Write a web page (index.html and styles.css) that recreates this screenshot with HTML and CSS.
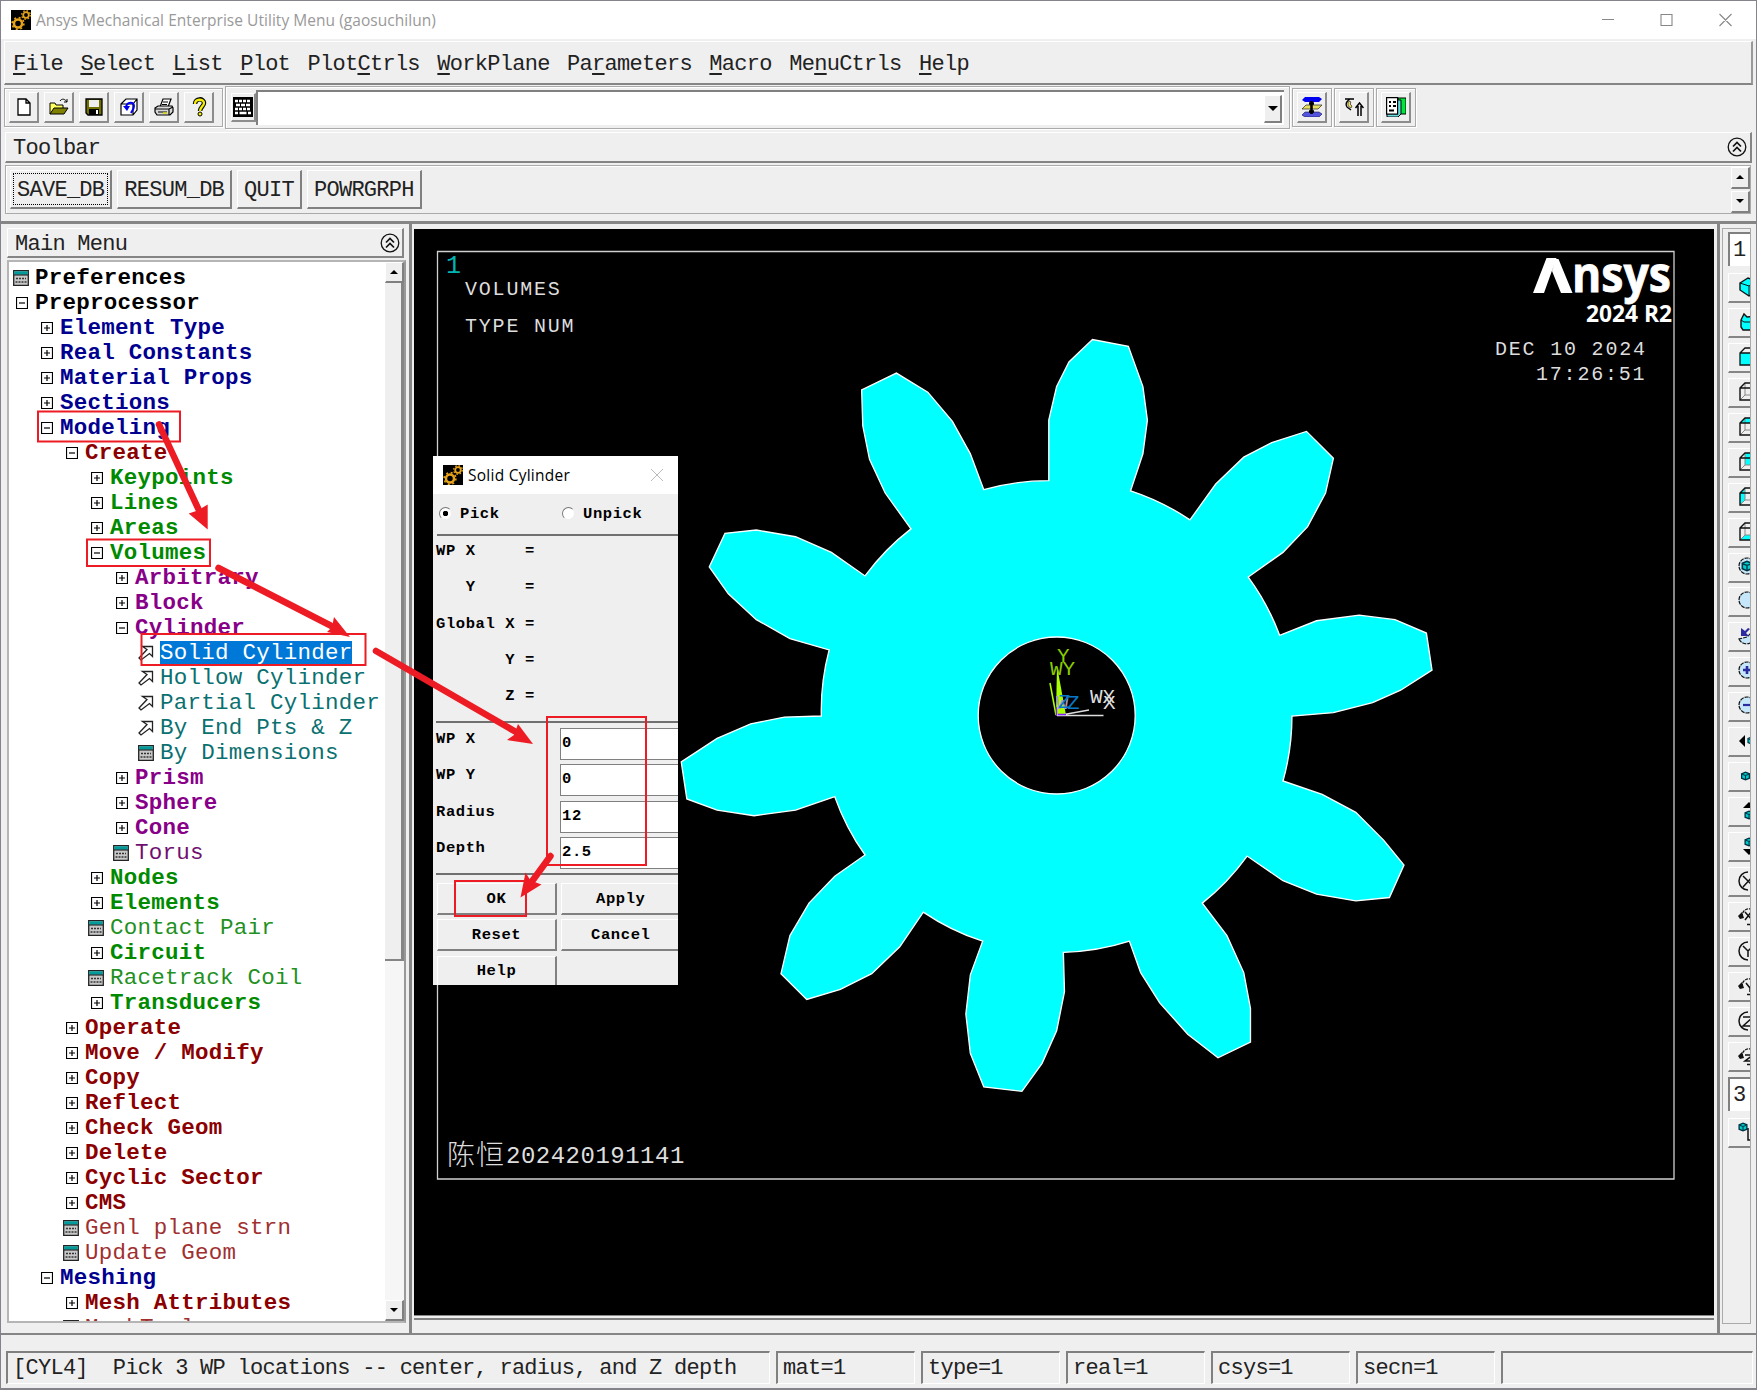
FILE: index.html
```html
<!DOCTYPE html>
<html lang="en">
<head>
<meta charset="utf-8">
<title>Ansys Mechanical Enterprise Utility Menu</title>
<link rel="stylesheet" href="styles.css">
</head>
<body>
<svg class="defs" width="0" height="0">
  <defs>
    <symbol id="plus" viewBox="0 0 12 12"><path d="M.5.5h11v11H.5z" fill="#fff" stroke="#000" stroke-width="1.2"/><path d="M3 6h6M6 3v6" stroke="#000" stroke-width="1.2"/></symbol>
    <symbol id="minus" viewBox="0 0 12 12"><path d="M.5.5h11v11H.5z" fill="#fff" stroke="#000" stroke-width="1.2"/><path d="M3 6h6" stroke="#000" stroke-width="1.2"/></symbol>
    <symbol id="form" viewBox="0 0 16 16"><path d="M.7.7h14.6v14.6H.7z" fill="#c8c8c8" stroke="#222" stroke-width="1.3"/><path d="M1.3 1.3h13.4v3.4H1.3z" fill="#009a9a"/><path d="M1 5h14" stroke="#111"/><path d="M3 8.5h10M2.500 12h11" stroke="#333" stroke-width="1.4" stroke-dasharray="2 1"/></symbol>
    <symbol id="pick" viewBox="0 0 16 16"><path d="M4.500 1.500h10v10l-3-3L3 15l-2-2 8-8.500z" fill="#fff" stroke="#222" stroke-width="1.3"/></symbol>
    <symbol id="gears" viewBox="0 0 20 20"><path d="M0 0h20v20H0z" fill="#000"/><circle cx="7" cy="13.500" r="4" fill="none" stroke="#e5a21c" stroke-width="2.500"/><circle cx="7" cy="13.500" r="5.900" fill="none" stroke="#e5a21c" stroke-width="1.600" stroke-dasharray="2 2.630"/><circle cx="15" cy="5" r="2.800" fill="none" stroke="#e5a21c" stroke-width="1.800"/><circle cx="15" cy="5" r="4.300" fill="none" stroke="#e5a21c" stroke-width="1.300" stroke-dasharray="1.600 1.780"/></symbol>
    <symbol id="collapse" viewBox="0 0 20 20"><circle cx="10" cy="10" r="8.800" fill="none" stroke="#111" stroke-width="1.300"/><path d="M6 9.500l4-4 4 4M6 14.500l4-4 4 4" fill="none" stroke="#111" stroke-width="1.700"/></symbol>
    <symbol id="cube" viewBox="0 0 20 20"><path d="M2 6l5-5h12v12l-5 5H2zM2 6h12v12M14 6l5-5" fill="none" stroke="#111" stroke-width="1.300"/></symbol>
    <symbol id="minicube" viewBox="0 0 9 9"><path d="M1 2.500L4.500 1 8 2.500v4L4.500 8 1 6.500z" fill="#00cfcf" stroke="#034" stroke-width="1.200"/><path d="M1.500 3l3 1 3-1M4.500 4v4" stroke="#034" fill="none"/></symbol>
    <symbol id="wire" viewBox="0 0 20 20"><path d="M7 1v12h12M2 18l5-5" fill="none" stroke="#888"/><path d="M2 18V6l5-5h12v12l-5 5H2zM2 6h12v12M14 6l5-5" fill="none" stroke="#111" stroke-width="1.400"/></symbol>
    <symbol id="rot" viewBox="0 0 20 20"><path d="M4 11c0-6 4-9 9-8" fill="none" stroke="#111" stroke-width="1.300" stroke-dasharray="3 1"/><path d="M0 10l4-4 2 6-4 1z" fill="#111"/></symbol>
  </defs>
</svg>

<div class="window">
  <header class="titlebar">
    <svg class="app-icon"><use href="#gears"/></svg>
    <span class="title">Ansys Mechanical Enterprise Utility Menu (gaosuchilun)</span>
    <svg class="controls" viewBox="0 0 130 14"><path d="M0 6.500h12M59 1.500h11v11H59zM117.500 1l12 12M129.500 1l-12 12" fill="none" stroke="#888" stroke-width="1.100"/></svg>
  </header>

  <nav class="menubar">
    <span><u>F</u>ile</span><span><u>S</u>elect</span><span><u>L</u>ist</span><span><u>P</u>lot</span><span>Plot<u>C</u>trls</span><span><u>W</u>orkPlane</span><span>Pa<u>r</u>ameters</span><span><u>M</u>acro</span><span>Me<u>n</u>uCtrls</span><span><u>H</u>elp</span>
  </nav>

  <div class="tools">
    <div class="group files">
      <button class="tool"><svg viewBox="0 0 20 20"><path d="M4 2h8l4 4v12H4zM12 2v4h4" fill="#fff" stroke="#000" stroke-width="1.300"/></svg></button>
      <button class="tool"><svg viewBox="0 0 20 20"><path d="M1 17V6h5l1 2h7v3" fill="#ffff60" stroke="#000"/><path d="M1 17l4-6h14l-4 6z" fill="#808000" stroke="#000"/><path d="M11 4c2-3 5-2 7 1m0-3v3h-3" fill="none" stroke="#000"/></svg></button>
      <button class="tool"><svg viewBox="0 0 20 20"><path d="M2 2h16v16H4l-2-2z" fill="#707000" stroke="#000" stroke-width="1.300"/><path d="M5 3h10v7H5z" fill="#eee"/><path d="M5 12h10v6H5z" fill="#000"/><path d="M12 13h2v4h-2z" fill="#fff"/></svg></button>
      <button class="tool"><svg viewBox="0 0 20 20"><path d="M2 7l5-5h11v11l-4 5H2zM2 7h12v11M14 7l4-5" fill="#fff" stroke="#000" stroke-width="1.200"/><path d="M7 10c1-5 8-6 8-1 0 3-2 5-3 7" fill="none" stroke="#0000f0" stroke-width="2"/><path d="M4 9l7 0-3 5z" fill="#0000f0"/></svg></button>
      <button class="tool"><svg viewBox="0 0 20 20"><path d="M6 10l3-8h8l-3 8" fill="#fff" stroke="#000" stroke-width="1.200"/><path d="M9 5h5M8 7.500h5" stroke="#000"/><path d="M1 11l3-2h14l1 2v4l-3 3H3l-2-3zM1 12h14l4-2M15 12v6" fill="#d8d8d8" stroke="#000" stroke-width="1.200"/><path d="M4 15h9" stroke="#000"/><path d="M9 16h4" stroke="#dd0" stroke-width="1.500"/></svg></button>
      <button class="tool"><svg viewBox="0 0 20 20"><path d="M6 7c0-6 9-6 9-1 0 3-4 4-4 8" fill="none" stroke="#000" stroke-width="4.500"/><path d="M6 7c0-5.500 9-5.500 9-1 0 3-4 4-4 8" fill="none" stroke="#f4ee00" stroke-width="2.300"/><circle cx="11" cy="17" r="2" fill="#f4ee00" stroke="#000"/></svg></button>
    </div>
    <div class="group command">
      <button class="tool keys"><svg viewBox="0 0 20 20"><path d="M0 0h20v20H0z" fill="#000"/><path d="M2 4h16" stroke="#fff" stroke-width="2.400" stroke-dasharray="3 1"/><path d="M3 8h15" stroke="#fff" stroke-width="2.400" stroke-dasharray="4 1"/><path d="M2 12h16" stroke="#fff" stroke-width="2.400" stroke-dasharray="3 1"/><path d="M2 16h3M6.500 16h7M15 16h3" stroke="#fff" stroke-width="2.400"/></svg></button>
      <div class="entry"><span class="arrow-btn"><i class="down"></i></span></div>
    </div>
    <div class="group"><button class="tool"><svg viewBox="0 0 20 20"><path d="M3 0h14l3 2-3 3H3L0 3z" fill="#0000f0"/><path d="M4 8h16l-4 4H0z" fill="#e8df60" stroke="#222" stroke-width=".7"/><path d="M3 15h14l3 2-3 3H3l-3-2z" fill="#5353dd" stroke="#115" stroke-width=".6"/><path d="M9.500 4v13M7 6.500h5M7 14.500h5" stroke="#000" stroke-width="2.600"/></svg></button></div>
    <div class="group"><button class="tool"><svg viewBox="0 0 20 20"><path d="M1 2h9M6 2c-3 2-5 5-3 8l4 3" fill="none" stroke="#000" stroke-width="1.300"/><path d="M5 4c-2 3-1 6 2 7l1-2c-2-1-2-3-1-4z" fill="#eee260" stroke="#222" stroke-width=".7"/><path d="M14 19V9M17 19V9M11.500 11l4-5 4 5" fill="none" stroke="#000" stroke-width="1.500"/></svg></button></div>
    <div class="group"><button class="tool"><svg viewBox="0 0 20 20"><path d="M12 1h8v16h-8z" fill="#00e63c" stroke="#000"/><path d="M10 3h5v14l-3 3H1v-3z" fill="#69dce0" stroke="#000"/><path d="M.6.6h11v16.500H.6z" fill="#fff" stroke="#000" stroke-width="1.200"/><path d="M3 5h2M7 5h3M3 9h2M7 9h3M3 13.500h5" stroke="#000" stroke-width="1.800"/></svg></button></div>
  </div>

  <div class="bar-head"><span>Toolbar</span><svg class="collapse"><use href="#collapse"/></svg></div>

  <div class="abbr">
    <button class="focused"><span>SAVE_DB</span></button><button><span>RESUM_DB</span></button><button><span>QUIT</span></button><button><span>POWRGRPH</span></button>
    <div class="spin"><span><i class="up"></i></span><span><i class="down"></i></span></div>
  </div>

  <main class="work">
    <aside class="side">
      <div class="bar-head side-head"><span>Main Menu</span><svg class="collapse"><use href="#collapse"/></svg></div>
      <div class="tree-wrap">
        <ul class="tree">
          <li class="l0"><svg class="form"><use href="#form"/></svg>Preferences</li>
          <li class="l0"><svg><use href="#minus"/></svg>Preprocessor</li>
          <li class="l1"><svg><use href="#plus"/></svg>Element Type</li>
          <li class="l1"><svg><use href="#plus"/></svg>Real Constants</li>
          <li class="l1"><svg><use href="#plus"/></svg>Material Props</li>
          <li class="l1"><svg><use href="#plus"/></svg>Sections</li>
          <li class="l1"><svg><use href="#minus"/></svg>Modeling</li>
          <li class="l2"><svg><use href="#minus"/></svg>Create</li>
          <li class="l3"><svg><use href="#plus"/></svg>Keypoints</li>
          <li class="l3"><svg><use href="#plus"/></svg>Lines</li>
          <li class="l3"><svg><use href="#plus"/></svg>Areas</li>
          <li class="l3"><svg><use href="#minus"/></svg>Volumes</li>
          <li class="l4"><svg><use href="#plus"/></svg>Arbitrary</li>
          <li class="l4"><svg><use href="#plus"/></svg>Block</li>
          <li class="l4"><svg><use href="#minus"/></svg>Cylinder</li>
          <li class="l5"><svg class="form"><use href="#pick"/></svg><span class="selected">Solid Cylinder</span></li>
          <li class="l5"><svg class="form"><use href="#pick"/></svg>Hollow Cylinder</li>
          <li class="l5"><svg class="form"><use href="#pick"/></svg>Partial Cylinder</li>
          <li class="l5"><svg class="form"><use href="#pick"/></svg>By End Pts &amp; Z</li>
          <li class="l5"><svg class="form"><use href="#form"/></svg>By Dimensions</li>
          <li class="l4"><svg><use href="#plus"/></svg>Prism</li>
          <li class="l4"><svg><use href="#plus"/></svg>Sphere</li>
          <li class="l4"><svg><use href="#plus"/></svg>Cone</li>
          <li class="l4 leaf"><svg class="form"><use href="#form"/></svg>Torus</li>
          <li class="l3"><svg><use href="#plus"/></svg>Nodes</li>
          <li class="l3"><svg><use href="#plus"/></svg>Elements</li>
          <li class="l3 leaf"><svg class="form"><use href="#form"/></svg>Contact Pair</li>
          <li class="l3"><svg><use href="#plus"/></svg>Circuit</li>
          <li class="l3 leaf"><svg class="form"><use href="#form"/></svg>Racetrack Coil</li>
          <li class="l3"><svg><use href="#plus"/></svg>Transducers</li>
          <li class="l2"><svg><use href="#plus"/></svg>Operate</li>
          <li class="l2"><svg><use href="#plus"/></svg>Move / Modify</li>
          <li class="l2"><svg><use href="#plus"/></svg>Copy</li>
          <li class="l2"><svg><use href="#plus"/></svg>Reflect</li>
          <li class="l2"><svg><use href="#plus"/></svg>Check Geom</li>
          <li class="l2"><svg><use href="#plus"/></svg>Delete</li>
          <li class="l2"><svg><use href="#plus"/></svg>Cyclic Sector</li>
          <li class="l2"><svg><use href="#plus"/></svg>CMS</li>
          <li class="l2 leaf"><svg class="form"><use href="#form"/></svg>Genl plane strn</li>
          <li class="l2 leaf"><svg class="form"><use href="#form"/></svg>Update Geom</li>
          <li class="l1"><svg><use href="#minus"/></svg>Meshing</li>
          <li class="l2"><svg><use href="#plus"/></svg>Mesh Attributes</li>
          <li class="l2 leaf"><svg class="form"><use href="#form"/></svg>MeshTool</li>
        </ul>
        <div class="scroll"><span class="cap"><i class="up"></i></span><span class="thumb"></span><span class="track"></span><span class="cap"><i class="down"></i></span></div>
      </div>
    </aside>

    <section class="graphics">
      <svg class="canvas" viewBox="414 229 1300 1086">
        <path d="M437.500 251.500h1236.500v927.500h-1236.500z" fill="none" stroke="#d0d0d0" stroke-width="1.300"/>
        <g transform="scale(1.1205)">
          <path class="gear" d="M878 437A211 211 0 0 1 936 429L936 375 943 345 954 323 975 303 1007 309 1020 345 1024 375 1020 405 1009 438A211 211 0 0 1 1062 464L1085 432 1110 408 1135 395 1166 385 1190 409 1183 440 1167 470 1145 493 1114 515A211 211 0 0 1 1142 567L1175 554 1213 549 1245 553 1273 565 1278 598 1250 616 1225 627 1190 636 1153 639A211 211 0 0 1 1145 697L1180 709 1210 725 1235 750 1253 772 1240 801 1210 804 1175 798 1145 786 1113 764A211 211 0 0 1 1073 806L1095 835 1110 868 1116 900 1116 930 1087 944 1060 923 1035 895 1018 868 1008 840A211 211 0 0 1 949 850L950 885 943 920 930 949 912 974 878 970 866 940 862 905 866 870 877 840A211 211 0 0 1 824 814L803 845 778 869 750 883 720 892 697 869 705 835 722 806 745 782 772 763A211 211 0 0 1 745 711L710 723 673 728 640 723 613 713 608 680 640 659 670 646 700 640 733 639A211 211 0 0 1 740 580L705 570 675 553 650 530 633 506 647 476 675 473 710 479 742 493 772 514A211 211 0 0 1 813 472L790 440 776 410 770 380 769 348 800 333 828 350 850 376 866 405Z"/>
        </g>
        <circle cx="1056.700" cy="715.500" r="78.500" fill="#000" stroke="#fff" stroke-width="1.300"/>
        <path d="M1056 715l1-49 9 49z" fill="#aaff00"/>
        <path d="M1050 683l6 32" stroke="#aaff00" stroke-width="1.500"/>
        <path d="M1057 715.500h46.500M1064 714.500l25-4.500" stroke="#ddd" stroke-width="1.400"/>
        <path d="M1056.500 716v-9M1058 714.500h8" stroke="#8020ff" stroke-width="1.400"/>
        <g class="triad">
          <text x="1057" y="662" fill="#88cc00">Y</text>
          <text x="1050" y="675" fill="#88cc00">WY</text>
          <text x="1056" y="709" fill="#a79ac8">W</text>
          <text x="1067" y="709" fill="#0878c8">Z</text>
          <text x="1058" y="708" fill="#0878c8">Z</text>
          <text x="1090" y="703" fill="#ddd">WX</text>
          <text x="1103" y="709" fill="#ddd">X</text>
        </g>
        <text class="plot-no" x="446" y="273">1</text>
        <text class="plot" x="465" y="295">VOLUMES</text>
        <text class="plot" x="465" y="332">TYPE NUM</text>
        <text class="plot" x="1495" y="355">DEC 10 2024</text>
        <text class="plot" x="1536" y="380">17:26:51</text>
        <path d="M1533 293l13.500-35h10l-12.500 35zM1556 259h2.500l14 34h-11.500l-9-22z" fill="#fff"/>
        <text class="logo" x="1572" y="292" textLength="99" lengthAdjust="spacingAndGlyphs">nsys</text>
        <text class="release" x="1586" y="322" textLength="86" lengthAdjust="spacingAndGlyphs">2024 R2</text>
        <text class="stamp" x="447" y="1165">陈恒<tspan class="digits" x="506" y="1163">202420191141</tspan></text>
      </svg>
    </section>

    <aside class="views">
      <div class="view-col">
        <div class="num">1</div>
        <div class="vb"><svg viewBox="0 0 20 20"><path d="M2 6l8-5 9 3v10l-8 5-9-6z" fill="#0ff" stroke="#111" stroke-width="1.400"/><path d="M2 6l9 3v10M11 9l8-5" fill="none" stroke="#111"/></svg></div>
        <div class="vb"><svg viewBox="0 0 20 20"><path d="M3 8l3-6 3 3 10-1v10l-4 4H5l-2-3z" fill="#0ff" stroke="#111" stroke-width="1.400"/><path d="M3 8l3 2h12" fill="none" stroke="#111"/></svg></div>
        <div class="vb"><svg viewBox="0 0 20 20"><path d="M2 6h12v12H2z" fill="#0ff"/><use href="#cube"/></svg></div>
        <div class="vb"><svg viewBox="0 0 20 20"><use href="#wire"/></svg></div>
        <div class="vb"><svg viewBox="0 0 20 20"><path d="M2 6l5-5h12l-5 5z" fill="#0ff"/><use href="#wire"/></svg></div>
        <div class="vb"><svg viewBox="0 0 20 20"><path d="M7 1h12v12H7z" fill="#0ff"/><use href="#wire"/></svg></div>
        <div class="vb"><svg viewBox="0 0 20 20"><path d="M2 6l5-5v12l-5 5z" fill="#0ff"/><use href="#wire"/></svg></div>
        <div class="vb"><svg viewBox="0 0 20 20"><path d="M2 18l5-5h12l-5 5z" fill="#0ff"/><use href="#wire"/></svg></div>
        <div class="vb"><svg viewBox="0 0 20 20"><circle cx="9" cy="9" r="8" class="lens"/><use href="#minicube" x="3" y="3" width="12" height="12"/></svg></div>
        <div class="vb"><svg viewBox="0 0 20 20"><circle cx="9" cy="9" r="8" class="lens"/></svg></div>
        <div class="vb"><svg viewBox="0 0 20 20"><path d="M1 13c3 6 10 6 14 2V5l-6 6z" class="lens"/><path d="M3 2v8h8l-3-3 4-4-2-1-3 3z" fill="#2c2ca0"/></svg></div>
        <div class="vb"><svg viewBox="0 0 20 20"><circle cx="9" cy="9" r="8" class="lens"/><path d="M5 9h8M9 5v8" stroke="#2c2ca0" stroke-width="2.600"/></svg></div>
        <div class="vb"><svg viewBox="0 0 20 20"><circle cx="9" cy="9" r="8" class="lens"/><path d="M5 9h8" stroke="#2c2ca0" stroke-width="2.200"/></svg></div>
        <div class="vb"><svg viewBox="0 0 20 20"><path d="M7 4v12l-6-6z"/><use href="#minicube" x="9" y="5" width="9" height="9"/></svg></div>
        <div class="vb"><svg viewBox="0 0 20 20"><use href="#minicube" x="2.500" y="5" width="10" height="10"/></svg></div>
        <div class="vb"><svg viewBox="0 0 20 20"><path d="M5 7l6-6 6 6z"/><use href="#minicube" x="6" y="9" width="10" height="10"/></svg></div>
        <div class="vb"><svg viewBox="0 0 20 20"><path d="M5 13l6 6 6-6z"/><use href="#minicube" x="6" y="1" width="10" height="10"/></svg></div>
        <div class="vb"><svg viewBox="0 0 20 20"><path d="M10 1a9 9 0 1 0 0 18M5 5l11 11M15 5L5 16" class="ink"/></svg></div>
        <div class="vb"><svg viewBox="0 0 20 20"><use href="#rot"/><path d="M7 6l9 10M14 5l-7 9M9 18.500h6" class="ink"/></svg></div>
        <div class="vb"><svg viewBox="0 0 20 20"><path d="M10 1a9 9 0 1 0 0 18M5 5l5 5 5-5M10 10v6" class="ink"/></svg></div>
        <div class="vb"><svg viewBox="0 0 20 20"><use href="#rot"/><path d="M8 7l4 5 4-5M12 12v4M9 18.500h6" class="ink"/></svg></div>
        <div class="vb"><svg viewBox="0 0 20 20"><path d="M10 1a9 9 0 1 0 0 18M5 6h10L5 15h10" class="ink"/></svg></div>
        <div class="vb"><svg viewBox="0 0 20 20"><use href="#rot"/><path d="M7 9h8l-8 6h8M9 18.500h6" class="ink"/></svg></div>
        <div class="num three">3</div>
        <div class="vb"><svg viewBox="0 0 20 20"><use href="#minicube" x="0" y="0" width="10" height="10"/><path d="M10 6v12h6" class="ink"/></svg></div>
      </div>
    </aside>
  </main>

  <footer class="status">
    <span>[CYL4]&nbsp; Pick 3 WP locations -- center, radius, and Z depth</span><span>mat=1</span><span>type=1</span><span>real=1</span><span>csys=1</span><span>secn=1</span><span></span>
  </footer>

  <section class="dialog">
    <header><svg class="app-icon"><use href="#gears"/></svg><span>Solid Cylinder</span><svg class="close" viewBox="0 0 12 12"><path d="M0 0l12 12M12 0L0 12" stroke="#bbb"/></svg></header>
    <div class="modes"><label><i class="radio on"></i>Pick</label><label><i class="radio"></i>Unpick</label></div>
    <div class="readout"><p>WP X     =</p><p>   Y     =</p><p>Global X =</p><p>       Y =</p><p>       Z =</p></div>
    <div class="fields">
      <label>WP X<b>0</b></label><label>WP Y<b>0</b></label><label>Radius<b>12</b></label><label>Depth<b>2.5</b></label>
    </div>
    <div class="actions"><button>OK</button><button>Apply</button><button>Reset</button><button>Cancel</button><button>Help</button></div>
  </section>

  <svg class="notes" viewBox="0 0 1757 1390">
    <g fill="none" stroke="#ed1c24" stroke-width="2">
      <path d="M38 411.500h142v30H38zM87 539.500h123v26.500H87zM141.500 634h224v31h-224zM547 717h99v148h-99zM455 881h71v35h-71z"/>
    </g>
    <g stroke="#ed1c24" stroke-width="6.500" stroke-linecap="round"><path d="M159 424.500l41 88M218.500 568l112 57.500M376 651l140 81M550.500 856l-19 26"/></g>
    <path d="M207.700 529.500l-19-16 9-3 10-6zM350 637l-23-5 5-5 2-10zM533 744l-26-4 7-5 4-11zM520.500 897.500l5-25 5 8 11 4z" fill="#ed1c24"/>
  </svg>
</div>
</body>
</html>
```
FILE: styles.css
```css
* { box-sizing: border-box; }
body { margin: 0; background: #efefef; overflow: hidden; }
button { margin: 0; padding: 0; font: inherit; letter-spacing: inherit; color: inherit; background: #efefef; }
.defs { position: absolute; }

.window {
  position: relative;
  width: 1757px;
  height: 1390px;
  display: flex;
  flex-direction: column;
  border: 1px solid #85828b;
  border-bottom-width: 2px;
  background: #efefef;
  color: #222;
  font: 22px/25px "Liberation Mono", "Noto Sans CJK SC", monospace;
  letter-spacing: -0.73px;
  overflow: hidden;
}

.titlebar {
  height: 38px;
  flex: none;
  display: flex;
  align-items: center;
  padding: 0 24px 0 10px;
  background: #fff;
  color: #999;
  font: 15.5px/20px "Open Sans", "Noto Sans", sans-serif;
  letter-spacing: 0.04px;
}
.app-icon { width: 20px; height: 20px; flex: none; margin-right: 5px; }
.titlebar .title { flex: 1; white-space: nowrap; }
.controls { width: 130px; height: 14px; }

.menubar {
  height: 44px;
  flex: none;
  margin: 2px 3px 0;
  padding: 4px 8px 0;
  display: flex;
  align-items: center;
  gap: 17.5px;
  border: 1px solid #fff;
  border-right: 2px solid #999;
  border-bottom: 2px solid #858585;
}
.menubar u { text-decoration-thickness: 2px; text-underline-offset: 3px; }

.tools { height: 47px; flex: none; display: flex; align-items: center; gap: 2px; padding: 0 3px 2px; }
.group {
  height: 39px;
  padding: 3px 4px;
  display: flex;
  align-items: center;
  gap: 5px;
  border: 1px solid #aaa;
  box-shadow: inset 1px 1px #fff, 1px 1px #fff;
}
.tool {
  width: 30px;
  height: 31px;
  display: flex;
  align-items: center;
  justify-content: center;
  border: solid;
  border-width: 1px 2px 2px 1px;
  border-color: #fff #8c8c8c #8c8c8c #fff;
}
.tool svg { width: 20px; height: 20px; }
.files { width: 219px; }
.command { width: 1065px; height: 43px; gap: 0; padding: 3px 5px; }
.keys { width: 25px; height: 29px; }
.entry {
  flex: 1;
  height: 35px;
  background: #fff;
  border: solid #808080;
  border-width: 2px 0 0 2px;
  display: flex;
  justify-content: flex-end;
  align-items: center;
  padding-right: 2px;
}
.arrow-btn, .cap, .spin span {
  display: flex;
  align-items: center;
  justify-content: center;
  background: #efefef;
  border: solid;
  border-width: 1px 2px 2px 1px;
  border-color: #fff #808080 #808080 #fff;
}
.arrow-btn { width: 18px; height: 28px; }
.up, .down { border: 4px solid transparent; }
.up { border-top: 0; border-bottom: 4px solid #000; }
.down { border-bottom: 0; border-top: 4px solid #000; }
.arrow-btn .down { border-width: 5px 5px 0; }

.bar-head {
  height: 31px;
  flex: none;
  margin: 0 4px;
  padding: 0 3px 0 7px;
  display: flex;
  align-items: center;
  justify-content: space-between;
  border: solid;
  border-width: 1px 2px 2px 1px;
  border-color: #fff #858585 #858585 #fff;
}
.bar-head span { padding-top: 3px; }
.collapse { width: 20px; height: 20px; }

.abbr {
  height: 49px;
  flex: none;
  margin: 2px 5px 0 4px;
  padding: 0 0 0 4px;
  display: flex;
  align-items: center;
  gap: 5px;
  border: 1px solid #aaa;
  box-shadow: inset 1px 1px #fff;
}
.abbr button {
  height: 39px;
  padding: 2px;
  border: solid;
  border-width: 1px 2px 2px 1px;
  border-color: #fff #808080 #808080 #fff;
}
.abbr button span { display: flex; height: 32px; align-items: center; padding: 3px 3px 0; border: 1px solid transparent; }
.abbr .focused span { border: 1px dotted #000; }
.spin { margin-left: auto; display: flex; flex-direction: column; gap: 2px; }
.spin span { width: 19px; height: 22px; }

.work {
  height: 1114px;
  flex: none;
  margin-top: 7px;
  display: flex;
  border-top: 3px solid #858585;
  border-bottom: 2px solid #858585;
}
.side { width: 411px; flex: none; padding: 4px 5px 0 6px; border-right: 3px solid #858585; }
.side-head { margin: 0; padding: 0 2px 0 7px; height: 30px; }
.tree-wrap { display: flex; height: 1063px; width: 399px; margin-top: 2px; border: 2px solid #b5b5b5; border-right-color: #999; background: #fff; }
.tree { flex: 1; margin: 0; padding: 4px 0 0 4px; list-style: none; overflow: hidden; font-size: 22.500px; font-weight: bold; letter-spacing: 0.24px; white-space: nowrap; }
.tree li { height: 25px; display: flex; align-items: center; }
.tree svg { width: 12px; height: 12px; flex: none; margin: 0 7px 2px 3px; }
.tree svg.form { width: 16px; height: 16px; margin: 0 6px 2px 0; }
.l0 { color: #000; }
.l1 { padding-left: 25px; color: #000090; }
.l2 { padding-left: 50px; color: #8b0000; }
.l3 { padding-left: 75px; color: #008a00; }
.l4 { padding-left: 100px; color: #880088; }
.l5 { padding-left: 125px; color: #0a7070; font-weight: normal; }
.tree .leaf { font-weight: normal; }
.l2.leaf { color: #a03030; }
.l3.leaf { color: #229022; }
.l4.leaf { color: #701070; }
.selected { background: #0078d7; color: #fff; }
.scroll { width: 19px; flex: none; display: flex; flex-direction: column; background: #f6f6f6; }
.cap { height: 21px; }
.thumb { height: 678px; background: #efefef; border-right: 3px solid #858585; border-bottom: 2px solid #858585; }
.track { flex: 1; }

.graphics { width: 1308px; flex: none; padding: 5px 0 0 2px; border-right: 3px solid #858585; }
.canvas { display: block; width: 1300px; height: 1086px; background: #000; box-shadow: 0 1px #888, 0 3px #efefef, 0 5px #808080; }
.gear { fill: #0ff; stroke: #fff; stroke-width: 1.2; }
.plot { font-size: 20px; letter-spacing: 1.8px; fill: #ddd; }
.plot-no { font-size: 25px; fill: #00b5b5; }
.triad { font-size: 21px; letter-spacing: 0; }
.logo { font: bold 49px "Open Sans", sans-serif; letter-spacing: 0; fill: #fff; stroke: #fff; stroke-width: 0.8; }
.release { font: bold 23px "Open Sans", sans-serif; letter-spacing: 0; fill: #fff; }
.stamp { font: 300 28px "Noto Sans CJK SC", sans-serif; letter-spacing: 1px; fill: #ddd; }
.digits { font: 24px "Liberation Mono", monospace; letter-spacing: 0.5px; }

.views { width: 31px; padding: 4px 0 0 2px; }
.view-col { width: 29px; height: 1096px; padding: 3px 0 0 5px; border: 1px solid #aaa; overflow: hidden; }
.num { height: 34px; padding: 4px 0 0 3px; margin-bottom: 7px; background: #fff; border: solid #808080; border-width: 2px 0 0 2px; overflow: hidden; }
.three { margin-top: 4px; }
.vb { height: 30px; margin-bottom: 4.950px; border-top: 1px solid #fff; border-left: 1px solid #fff; border-bottom: 2px solid #858585; padding: 3px 0 0 9px; overflow: hidden; }
.vb svg { display: block; width: 20px; height: 20px; }
.lens { fill: #c6e6fa; stroke: #111; stroke-width: 1.2; stroke-dasharray: 4 1; }
.ink { fill: none; stroke: #111; stroke-width: 1.5; }

.status { display: grid; grid-template-columns: 764px repeat(5, 139px) 1fr; gap: 6px; margin: 16px 3px 0 5px; height: 33px; flex: none; }
.status span { padding: 3px 0 0 5px; white-space: pre; border: solid; border-width: 2px 1px 1px 2px; border-color: #808080 #fff #fff #808080; }

.dialog {
  position: absolute;
  left: 432px;
  top: 455px;
  width: 245px;
  height: 529px;
  overflow: hidden;
  background: #efefef;
  color: #000;
  font: bold 15.500px/18px "Liberation Mono", monospace;
  letter-spacing: 0.6px;
}
.dialog header { height: 38px; display: flex; align-items: center; padding: 0 15px 0 10px; background: #fff; font: 15.500px/20px "Open Sans", sans-serif; letter-spacing: 0.25px; }
.close { width: 12px; height: 12px; margin-left: auto; }
.modes { height: 42px; margin-left: 4px; display: flex; align-items: center; border-bottom: 2px solid #707070; }
.modes label { width: 123px; flex: none; display: flex; align-items: center; }
.radio { width: 13px; height: 13px; margin: 0 8px 2px 2px; border-radius: 50%; background: #fff; border: 1.500px solid; border-color: #777 #eee #eee #777; }
.on { background: radial-gradient(circle, #000 2.500px, #fff 3px); }
.readout { margin-left: 3px; height: 187px; border-bottom: 2px solid #707070; white-space: pre; }
.readout p { margin: 0; height: 36.250px; padding-top: 6px; }
.fields { margin-left: 3px; height: 152px; padding-top: 5px; border-bottom: 2px solid #707070; }
.fields label { width: 260px; height: 36.250px; padding-top: 2px; display: flex; justify-content: space-between; }
.fields b { width: 136px; height: 32px; margin-top: -2px; padding: 5px 1px; background: #fff; border: 1.500px solid #808080; }
.actions { margin: 8px 0 0 4px; width: 240px; display: grid; grid-template-columns: 120px 120px; grid-auto-rows: 32px; gap: 4.250px; }
.actions button { border: solid; border-width: 1px 2px 2px 1px; border-color: #fff #808080 #808080 #fff; }

.notes { position: absolute; left: -1px; top: -1px; width: 1757px; height: 1390px; pointer-events: none; }
```
